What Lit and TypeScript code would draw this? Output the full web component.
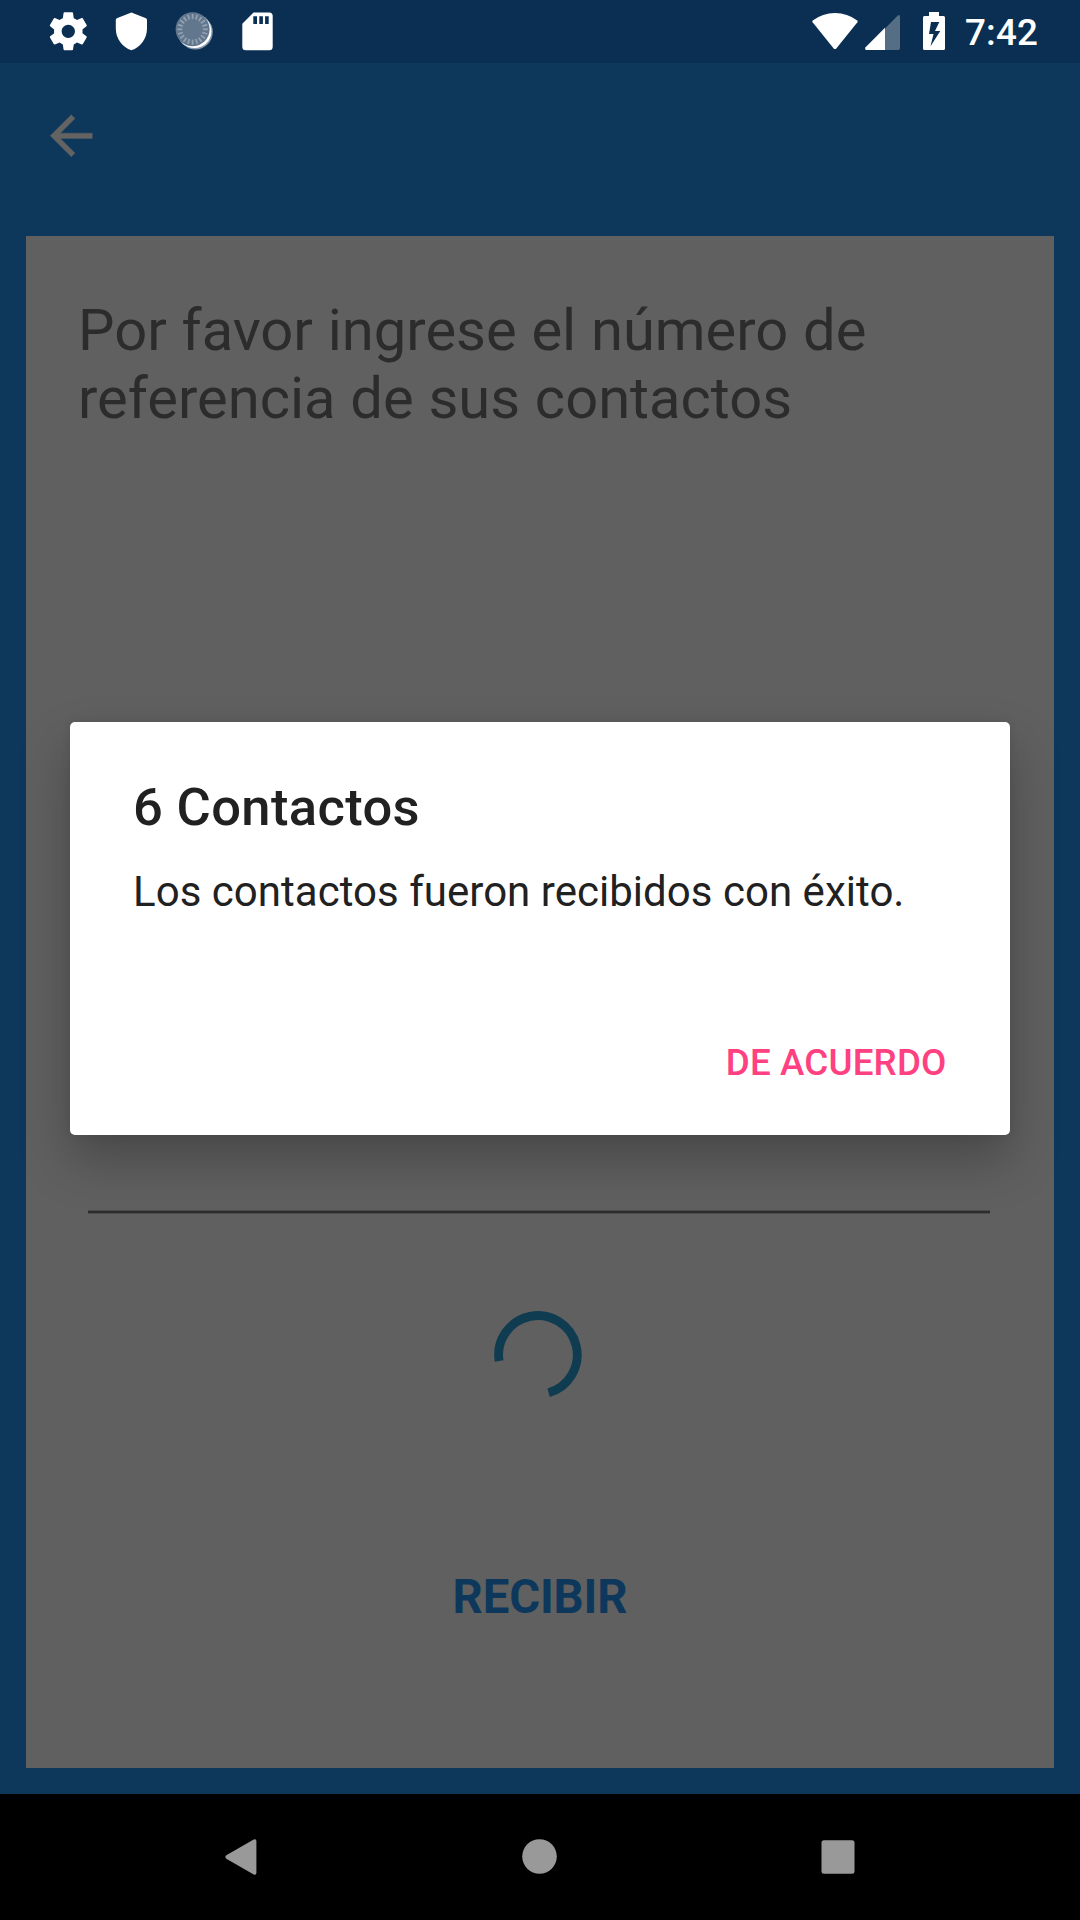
import { LitElement, html, css, svg } from "lit";
import { customElement, property } from "lit/decorators.js";

const ticks = Array.from({ length: 20 }, (_, i) => i * 18);

@customElement("status-bar")
class StatusBar extends LitElement {
  @property() time = "";

  static styles = css`
    :host { display: flex; justify-content: space-between; height: 63px; background: #0a2f52; color: #fff; }
    .right { display: flex; }
    .time { width: 115px; box-sizing: border-box; font: 500 36.75px/43px Roboto, sans-serif; letter-spacing: 0.2px; padding-top: 11px; white-space: nowrap; }
    svg { display: block; }
  `;

  render() {
    return html`
      <svg width="300" height="63" viewBox="0 0 300 63" fill="#fff">
        <g transform="translate(45.5 8.5) scale(1.9)">
          <path d="M19.43 12.98c.04-.32.07-.64.07-.98s-.03-.66-.07-.98l2.11-1.65c.19-.15.24-.42.12-.64l-2-3.46c-.12-.22-.39-.3-.61-.22l-2.49 1c-.52-.4-1.08-.73-1.69-.98l-.38-2.65C14.46 2.18 14.25 2 14 2h-4c-.25 0-.46.18-.49.42l-.38 2.65c-.61.25-1.17.59-1.69.98l-2.49-1c-.23-.09-.49 0-.61.22l-2 3.46c-.13.22-.07.49.12.64l2.11 1.65c-.04.32-.07.65-.07.98s.03.66.07.98l-2.11 1.65c-.19.15-.24.42-.12.64l2 3.46c.12.22.39.3.61.22l2.49-1c.52.4 1.08.73 1.69.98l.38 2.65c.03.24.24.42.49.42h4c.25 0 .46-.18.49-.42l.38-2.65c.61-.25 1.17-.59 1.69-.98l2.49 1c.23.09.49 0 .61-.22l2-3.46c.12-.22.07-.49-.12-.64l-2.11-1.65zM12 15.5c-1.93 0-3.5-1.57-3.5-3.5s1.57-3.5 3.5-3.5 3.5 1.57 3.5 3.5-1.57 3.5-3.5 3.5z"/>
        </g>
        <path d="M131.4 12.4L146 18.3q1 .5 1 1.6V28.500C147 38.500 140.500 47.500 131.400 50.300C122.300 47.500 115.800 38.500 115.800 28.500V19.900q0-1.100 1-1.600Z"/>
        <circle cx="195.300" cy="32" r="17.500" fill="#8999aa"/>
        <circle cx="194.500" cy="31.200" r="16.900"/>
        <circle cx="192.600" cy="29.300" r="17" fill="#62778e"/>
        <g stroke="#93a2b2" stroke-width="1.700">
          ${ticks.map((a) => svg`<path d="M192.600 14V19" transform="rotate(${a} 192.600 29.300)"/>`)}
        </g>
        <path fill-rule="evenodd" d="M253.500 12.500H269.200Q272.700 12.500 272.700 16V46.800Q272.700 50.300 269.200 50.300H245.800Q242.300 50.300 242.300 46.800V23.700ZM253.300 16.300V24H257V16.300ZM259.300 16.300V24H262.900V16.300ZM265.100 16.300V24H268.700V16.300Z"/>
      </svg>
      <div class="right">
        <svg width="160" height="63" viewBox="805 0 160 63" fill="#fff">
          <path d="M812.700 20.600Q822.500 13 835 13T857.300 20.600Q858 21.400 857.400 22.300L836.300 48.400Q835 49.700 833.700 48.400L812.600 22.300Q812 21.400 812.700 20.600Z"/>
          <path d="M885 28.500L897.800 15.500Q900 14.300 900 16.700V48Q900 50 898 50H885Z" fill="#566d86"/>
          <path d="M885 27.800V50H866.500Q864.200 49.600 865.600 47.300Z"/>
          <path fill-rule="evenodd" d="M929 12H939V16H943.500Q945 16 945 17.500V48.500Q945 50 943.500 50H924.500Q923 50 923 48.500V17.500Q923 16 924.500 16H929ZM931 22L929 34H933.500L930.500 46.300L940.300 31H935L939.300 22Z"/>
        </svg>
        <span class="time">${this.time}</span>
      </div>
    `;
  }
}

@customElement("nav-bar")
class NavBar extends LitElement {
  static styles = css`
    :host { display: block; height: 126px; background: #000; }
    svg { display: block; }
  `;

  render() {
    return html`
      <svg width="1080" height="126" viewBox="0 1794 1080 126" fill="#999">
        <path d="M253.700 1839.500Q256.400 1838.200 256.400 1841.500V1872.500Q256.400 1875.800 253.700 1874.500L226.300 1858.700Q224.300 1857 226.300 1855.300Z"/>
        <circle cx="539.500" cy="1856.500" r="17.300"/>
        <rect x="821.500" y="1840.300" width="33" height="33.500" rx="2.500"/>
      </svg>
    `;
  }
}

@customElement("alert-dialog")
class AlertDialog extends LitElement {
  @property() heading = "";
  @property() message = "";
  @property() action = "";

  static styles = css`
    :host {
      display: flex; flex-direction: column; box-sizing: border-box;
      width: 940px; height: 413px; padding: 54px 63px 0; border-radius: 5px;
      background: #fff; color: #212121; font-family: Roboto, sans-serif;
      box-shadow: 0 25px 50px rgba(0, 0, 0, 0.25), 0 0 10px rgba(0, 0, 0, 0.08);
    }
    .title { margin: 0; font-size: 52.5px; line-height: 62px; font-weight: 500; letter-spacing: 0.35px; }
    .message { margin: 0; padding-top: 29px; font-size: 42px; line-height: 50px; letter-spacing: 0.03px; white-space: nowrap; }
    .action {
      align-self: flex-end; margin: 124px 0.5px 0 0; padding: 0; border: 0; background: none;
      color: #ff4081; font: 500 36.75px/43px Roboto, sans-serif; letter-spacing: 0.15px;
    }
  `;

  render() {
    return html`
      <h2 class="title">${this.heading}</h2>
      <p class="message">${this.message}</p>
      <button class="action">${this.action}</button>
    `;
  }
}

@customElement("app-root")
class AppRoot extends LitElement {
  static styles = css`
    :host {
      display: flex; flex-direction: column; position: relative; width: 1080px; height: 1920px;
      overflow: hidden; background: #0d385b; font-family: Roboto, sans-serif;
    }
    .toolbar { height: 147px; padding: 25px 0 0 39px; box-sizing: border-box; }
    .toolbar svg { display: block; margin-top: 16px; }
    .body { flex: 1; display: flex; padding: 26px; }
    .card {
      flex: 1; display: flex; flex-direction: column; align-items: center;
      background: #606060;
    }
    .prompt {
      align-self: stretch; box-sizing: border-box; margin: 0; padding: 60px 52px 0; height: 974px;
      font-size: 57.9px; line-height: 68px; font-weight: 400; word-spacing: 0.4px; color: #2c2c2c;
    }
    .field { width: 902px; height: 2px; margin-right: 2px; background: #2d2d2d; border: solid #4c4c4c; border-width: 1px 0; }
    .spinner { display: block; margin: 91px 5px 0 0; }
    .submit {
      margin: 164px 0 0; padding: 0; border: 0; background: none;
      font: 700 47.25px/56px Roboto, sans-serif; letter-spacing: -0.15px; color: #0d385b;
    }
    .overlay {
      position: absolute; inset: 63px 0 126px; display: flex; align-items: center; justify-content: center;
    }
  `;

  render() {
    return html`
      <status-bar time="7:42"></status-bar>
      <header class="toolbar">
        <svg width="63" height="63" viewBox="-0.300 -0.100 24 24" fill="#636363" stroke="#636363" stroke-width="0.150">
          <path d="M20 11H7.830l5.590-5.590L12 4l-8 8 8 8 1.410-1.410L7.830 13H20v-2z"/>
        </svg>
      </header>
      <main class="body">
        <section class="card">
          <h1 class="prompt">Por favor ingrese el número de referencia de sus contactos</h1>
          <div class="field"></div>
          <svg class="spinner" width="100" height="100" viewBox="487.300 1304.300 100 100">
            <path d="M498.400 1360.300A39.300 39.300 0 1 1 547.900 1392" fill="none" stroke="#0f3c50" stroke-width="8.800"/>
          </svg>
          <button class="submit">RECIBIR</button>
        </section>
      </main>
      <nav-bar></nav-bar>
      <div class="overlay">
        <alert-dialog
          heading="6 Contactos"
          message="Los contactos fueron recibidos con éxito."
          action="DE ACUERDO"
        ></alert-dialog>
      </div>
    `;
  }
}
